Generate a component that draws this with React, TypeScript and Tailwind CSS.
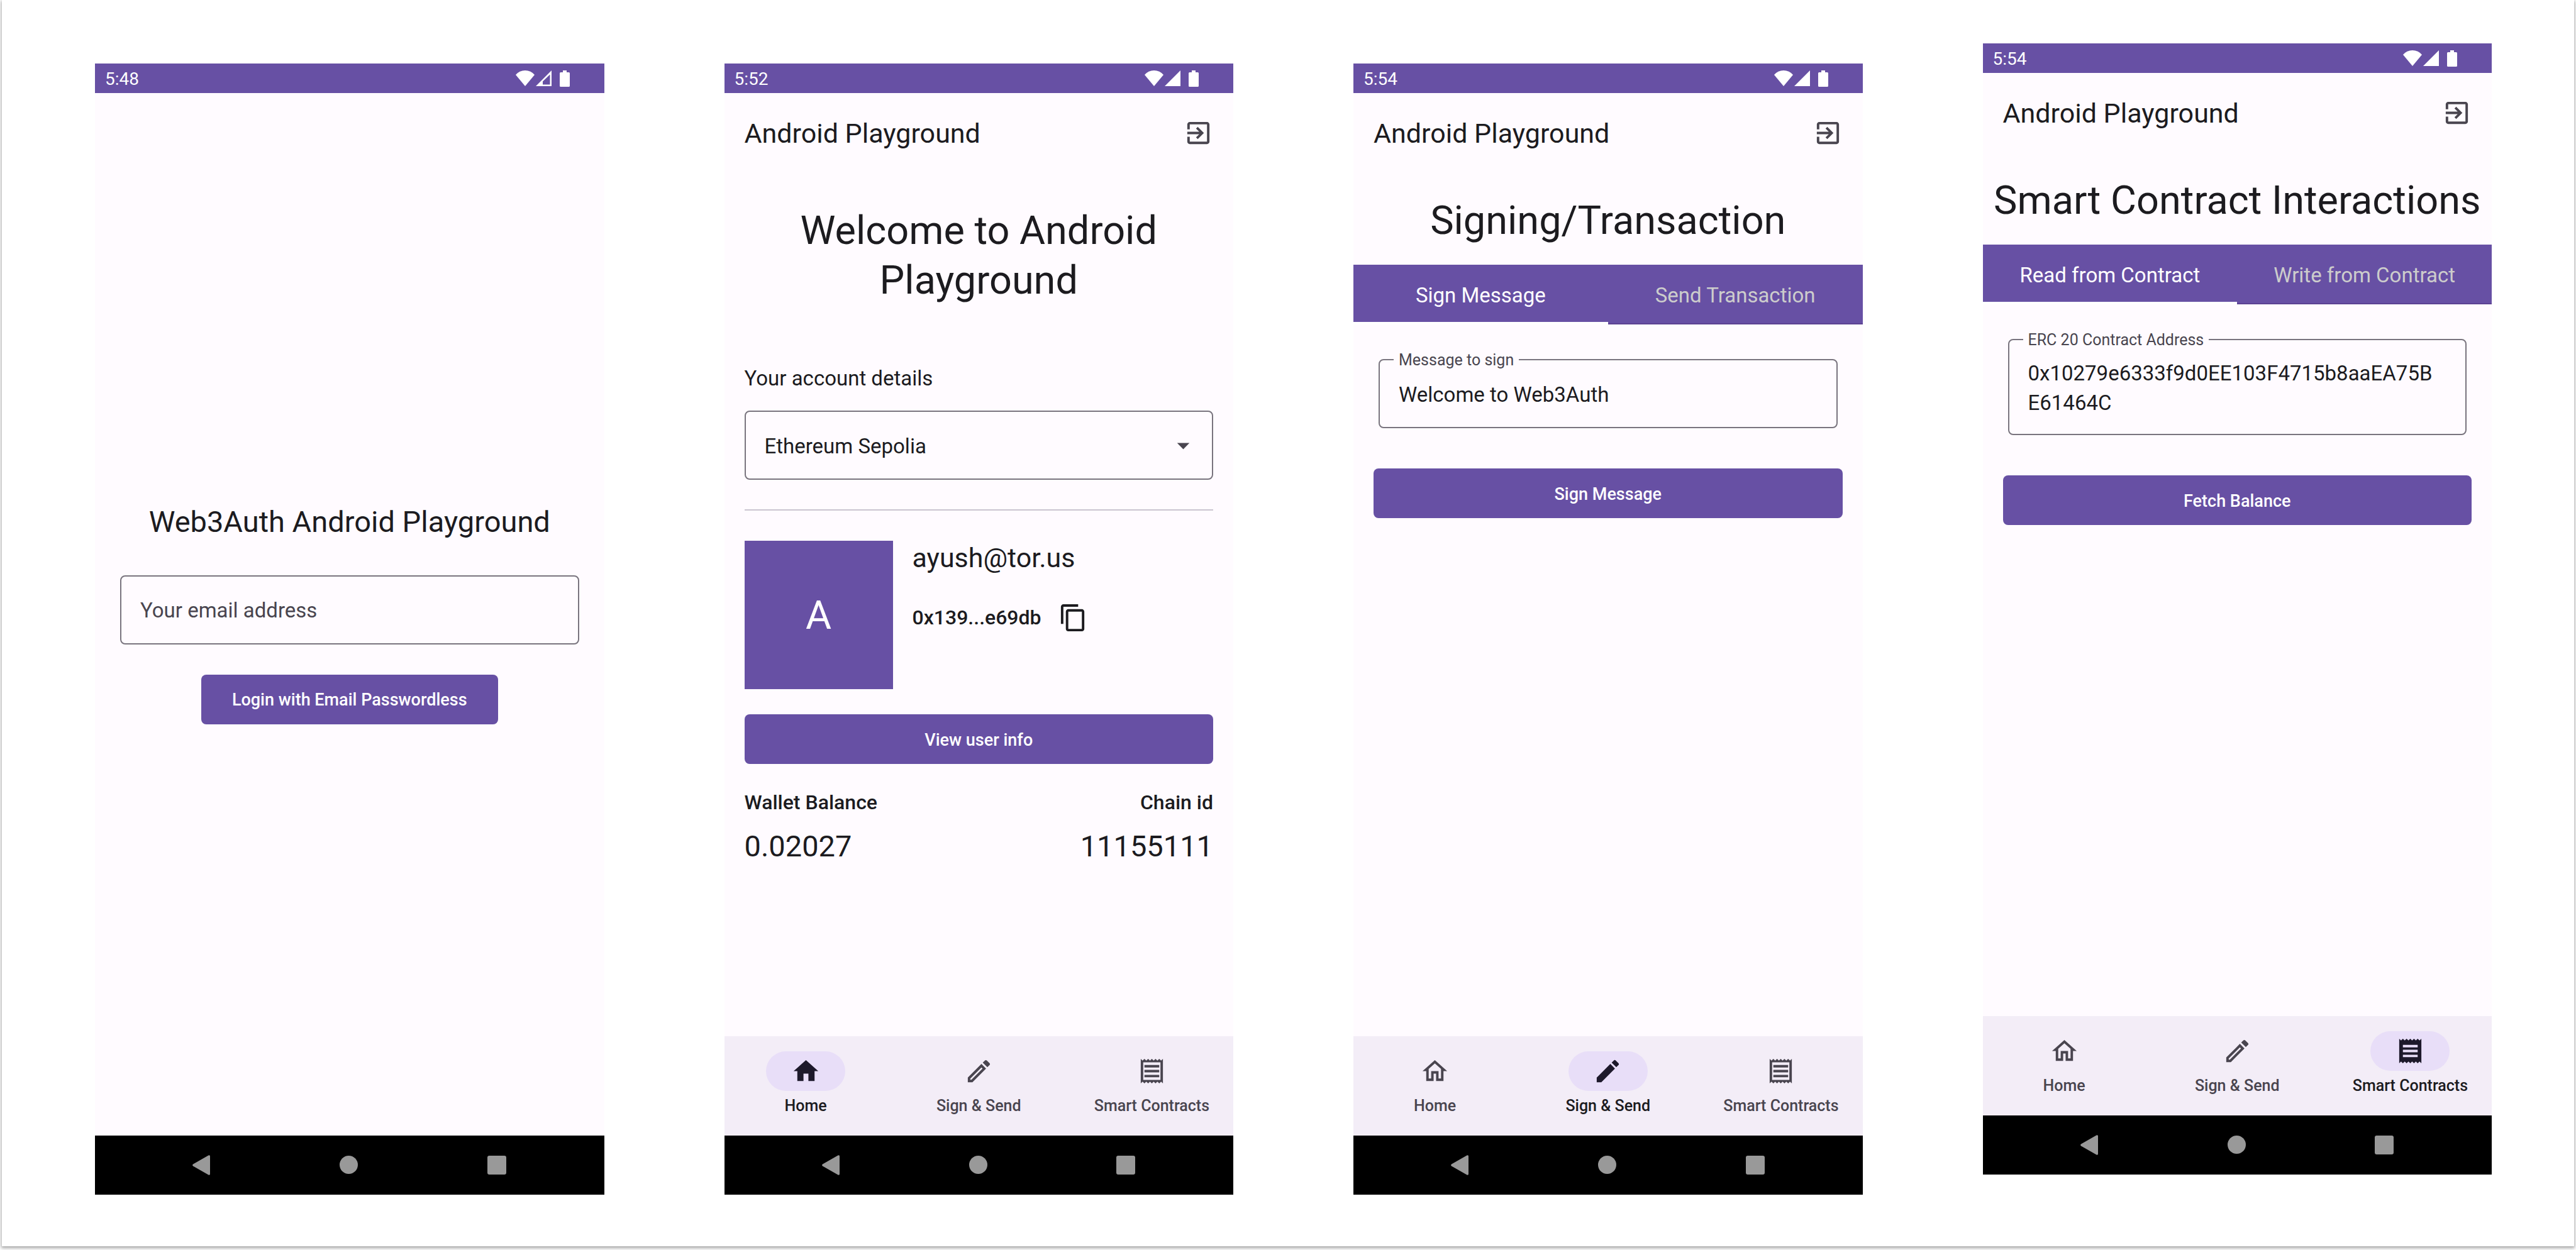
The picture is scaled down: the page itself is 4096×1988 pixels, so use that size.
import type { ReactNode } from "react";

type Tab = "home" | "sign" | "contracts";

const RECEIPT_EDGE =
  "M3 22l1.5-1.5L6 22l1.5-1.5L9 22l1.5-1.5L12 22l1.5-1.5L15 22l1.5-1.5L18 22l1.5-1.5L21 22V2l-1.5 1.5L18 2l-1.5 1.5L15 2l-1.5 1.5L12 2l-1.5 1.5L9 2 7.5 3.5 6 2 4.5 3.5 3 2v20z";

const ICONS = {
  exit: "M10.09 15.59L11.5 17l5-5-5-5-1.41 1.41L12.67 11H3v2h9.67l-2.58 2.59zM19 3H5c-1.11 0-2 .9-2 2v4h2V5h14v14H5v-4H3v4c0 1.1.89 2 2 2h14c1.1 0 2-.9 2-2V5c0-1.1-.9-2-2-2z",
  copy: "M16 1H4c-1.1 0-2 .9-2 2v14h2V3h12V1zm3 4H8c-1.1 0-2 .9-2 2v14c0 1.1.9 2 2 2h11c1.1 0 2-.9 2-2V7c0-1.1-.9-2-2-2zm0 16H8V7h11v14z",
  dropDown: "M7 10l5 5 5-5z",
  home: "M10 20v-6h4v6h5v-8h3L12 3 2 12h3v8z",
  homeOutline:
    "M12 5.69l5 4.5V18h-2v-6H9v6H7v-7.81l5-4.5M12 3L2 12h3v8h6v-6h2v6h6v-8h3L12 3z",
  edit: "M3 17.25V21h3.75L17.81 9.94l-3.75-3.75L3 17.25zM20.71 7.04c.39-.39.39-1.02 0-1.41l-2.34-2.34c-.39-.39-1.02-.39-1.41 0l-1.83 1.83 3.75 3.75 1.83-1.83z",
  editOutline:
    "M14.06 9.02l.92.92L5.92 19H5v-.92l9.06-9.06M17.66 3c-.25 0-.51.1-.7.29l-1.83 1.83 3.75 3.75 1.83-1.83c.39-.39.39-1.02 0-1.41l-2.34-2.34c-.2-.2-.45-.29-.71-.29zm-3.6 3.19L3 17.25V21h3.75L17.81 9.94l-3.75-3.75z",
  receipt: RECEIPT_EDGE + "M18 17H6v-2h12v2zm0-4H6v-2h12v2zm0-4H6V7h12v2z",
  receiptOutline:
    RECEIPT_EDGE +
    "M19 19.09H5V4.91h14v14.18zM6 15h12v2H6zm0-4h12v2H6zm0-4h12v2H6z",
};

function Icon({ name }: { name: keyof typeof ICONS }) {
  return (
    <svg
      viewBox="0 0 24 24"
      className="size-[47px] shrink-0"
      fill="currentColor"
      fillRule={name === "receipt" || name === "receiptOutline" ? "evenodd" : undefined}
      aria-hidden="true"
    >
      <path d={ICONS[name]} />
    </svg>
  );
}

function StatusBar({ time, weakSignal }: { time: string; weakSignal?: boolean }) {
  return (
    <div className="flex h-[47px] shrink-0 items-center justify-between bg-[#6750a4] pr-[55px] pl-4 text-white">
      <span className="pt-0.5 text-[28px] leading-[47px]">{time}</span>
      <div className="flex items-center">
        <svg viewBox="0 0 30 25" className="h-[25px] w-[30px]" fill="currentColor" aria-hidden="true">
          <path d="M15 25 0 7Q6 0 15 0T30 7z" />
        </svg>
        <svg viewBox="0 0 25 25" className="ml-0.5 h-[25px] w-[25px]" aria-hidden="true">
          {weakSignal ? (
            <path
              d="M0 25 25 0V25zM11 22.5H22.5V6.5L11 17.5z"
              fill="currentColor"
              fillRule="evenodd"
            />
          ) : (
            <path d="M0 25 25 0V25z" fill="currentColor" />
          )}
        </svg>
        <svg viewBox="0 0 16 26" className="ml-[13px] h-[26px] w-4" fill="currentColor" aria-hidden="true">
          <path d="M5 0h6v3h3.500q1.500 0 1.500 1.500v20q0 1.500-1.500 1.500h-13Q0 26 0 24.500v-20Q0 3 1.500 3H5z" />
        </svg>
      </div>
    </div>
  );
}

function AppBar() {
  return (
    <header className="flex h-[126px] shrink-0 items-center justify-between px-8">
      <span className="pt-0.5 text-[43px] leading-[55px]">Android Playground</span>
      <button type="button" aria-label="Log out" className="text-[#49454f]">
        <Icon name="exit" />
      </button>
    </header>
  );
}

const NAV_ITEMS: {
  id: Tab;
  label: string;
  active: keyof typeof ICONS;
  idle: keyof typeof ICONS;
}[] = [
  { id: "home", label: "Home", active: "home", idle: "homeOutline" },
  { id: "sign", label: "Sign & Send", active: "edit", idle: "editOutline" },
  { id: "contracts", label: "Smart Contracts", active: "receipt", idle: "receiptOutline" },
];

function BottomNav({ current }: { current: Tab }) {
  return (
    <nav className="grid h-[158px] shrink-0 grid-cols-3 gap-4 bg-[#f3edf7]">
      {NAV_ITEMS.map((item) => {
        const on = item.id === current;
        return (
          <button
            key={item.id}
            type="button"
            aria-current={on ? "page" : undefined}
            className={
              on
                ? "flex flex-col items-center gap-2 pt-6 text-[#1c1b1f]"
                : "flex flex-col items-center gap-2 pt-6 text-[#49454f]"
            }
          >
            <span
              className={
                on
                  ? "flex h-[63px] w-[126px] items-center justify-center rounded-full bg-[#e8def8] text-[#1d192b]"
                  : "flex h-[63px] w-[126px] items-center justify-center"
              }
            >
              <Icon name={on ? item.active : item.idle} />
            </span>
            <span className="text-[25px] leading-8 font-medium whitespace-nowrap">{item.label}</span>
          </button>
        );
      })}
    </nav>
  );
}

function SystemNav() {
  const button = "flex w-[94px] items-center justify-center";
  return (
    <div className="flex h-[94px] shrink-0 items-stretch justify-between bg-black pr-[124px] pl-[122px] text-[#999]">
      <button type="button" aria-label="Back" className={button}>
        <svg viewBox="0 0 28 32" className="h-8 w-7" fill="currentColor" aria-hidden="true">
          <path d="M1 14.500 25.500.5Q28-.5 28 2v28q0 2.500-2.500 1.500L1 17.500Q-.8 16 1 14.500z" />
        </svg>
      </button>
      <button type="button" aria-label="Home screen" className={button}>
        <span className="size-[29px] rounded-full bg-current" />
      </button>
      <button type="button" aria-label="Recent apps" className={button}>
        <span className="size-[30px] rounded-[3px] bg-current" />
      </button>
    </div>
  );
}

function Phone({
  time,
  weakSignal,
  tab,
  className,
  children,
}: {
  time: string;
  weakSignal?: boolean;
  tab?: Tab;
  className?: string;
  children: ReactNode;
}) {
  return (
    <section
      className={`flex aspect-[9/20] min-w-0 flex-col bg-[#fffbff] text-[#1c1b1f] ${className ?? ""}`}
    >
      <StatusBar time={time} weakSignal={weakSignal} />
      {tab && <AppBar />}
      <div className="flex min-h-0 flex-1 flex-col">{children}</div>
      {tab && <BottomNav current={tab} />}
      <SystemNav />
    </section>
  );
}

function FilledButton({ children, className }: { children: ReactNode; className?: string }) {
  return (
    <button
      type="button"
      className={`h-[79px] rounded-lg bg-[#6750a4] px-[49px] pt-0.5 text-[27px] leading-10 font-medium text-white ${className ?? ""}`}
    >
      {children}
    </button>
  );
}

function TabRow({ first, second }: { first: string; second: string }) {
  return (
    <div role="tablist" className="mt-[31px] grid h-[95px] shrink-0 grid-cols-2 bg-[#6750a4] text-[33px] leading-[47px]">
      <button role="tab" type="button" aria-selected="true" className="border-b-4 border-white pt-1.5 text-white">
        {first}
      </button>
      <button role="tab" type="button" aria-selected="false" className="border-b-2 border-[#5b4292] pt-1 text-[#ccc]">
        {second}
      </button>
    </div>
  );
}

const FIELD =
  "block w-full rounded-lg border-2 border-[#79747e] bg-transparent px-[30px] text-[33px] leading-[47px]";

function LabelledField({ id, label, children }: { id: string; label: string; children: ReactNode }) {
  return (
    <div className="relative mx-10 mt-[55px]">
      {children}
      <label
        htmlFor={id}
        className="absolute -top-3.5 left-6 bg-[#fffbff] px-2 text-[25px] leading-8 text-[#49454f]"
      >
        {label}
      </label>
    </div>
  );
}

function LoginScreen() {
  return (
    <div className="flex flex-1 flex-col items-center justify-center px-10 pb-1">
      <h1 className="text-[47px] leading-[63px]">Web3Auth Android Playground</h1>
      <input
        type="email"
        aria-label="Your email address"
        placeholder="Your email address"
        className={`mt-[54px] h-[110px] pt-0.5 ${FIELD} placeholder:text-[#49454f] placeholder:opacity-100`}
      />
      <FilledButton className="mt-12">Login with Email Passwordless</FilledButton>
    </div>
  );
}

function HomeScreen() {
  return (
    <div className="flex flex-col px-8 pt-[53px]">
      <h1 className="text-center text-[63px] leading-[79px]">Welcome to Android Playground</h1>
      <label htmlFor="chain" className="mt-[93px] text-[33px] leading-[47px]">
        Your account details
      </label>
      <div className="relative mt-7">
        <select id="chain" className={`h-[110px] appearance-none pt-0.5 ${FIELD}`}>
          <option>Ethereum Sepolia</option>
        </select>
        <span className="pointer-events-none absolute inset-y-0 right-6 flex items-center text-[#49454f]">
          <Icon name="dropDown" />
        </span>
      </div>
      <hr className="mt-[47px] border-t-2 border-[#cac4d0]" />
      <div className="mt-12 flex gap-[31px]">
        <div className="flex size-[236px] shrink-0 items-center justify-center bg-[#6750a4] text-[63px] leading-[79px] text-white">
          A
        </div>
        <div className="flex flex-col">
          <span className="text-[43px] leading-[55px]">ayush@tor.us</span>
          <div className="mt-5 flex items-center text-[32px] leading-[47px] font-medium">
            <span className="pr-1">0x139...e69db</span>
            <button type="button" aria-label="Copy address" className="flex size-[94px] items-center justify-center">
              <Icon name="copy" />
            </button>
          </div>
        </div>
      </div>
      <FilledButton className="mt-10">View user info</FilledButton>
      <dl className="mt-[38px] flex justify-between">
        <div>
          <dt className="text-[32px] leading-[47px] font-medium">Wallet Balance</dt>
          <dd className="mt-3.5 text-[47px] leading-[63px]">0.02027</dd>
        </div>
        <div className="text-right">
          <dt className="text-[32px] leading-[47px] font-medium">Chain id</dt>
          <dd className="mt-3.5 text-[47px] leading-[63px]">11155111</dd>
        </div>
      </dl>
    </div>
  );
}

function SignScreen() {
  return (
    <div className="flex flex-col pt-[37px]">
      <h1 className="text-center text-[63px] leading-[79px] whitespace-nowrap">Signing/Transaction</h1>
      <TabRow first="Sign Message" second="Send Transaction" />
      <LabelledField id="message" label="Message to sign">
        <input id="message" type="text" defaultValue="Welcome to Web3Auth" className={`h-[110px] pt-0.5 ${FIELD}`} />
      </LabelledField>
      <FilledButton className="mx-8 mt-16">Sign Message</FilledButton>
    </div>
  );
}

function ContractScreen() {
  return (
    <div className="flex flex-col pt-[37px]">
      <h1 className="text-center text-[63px] leading-[79px] whitespace-nowrap">Smart Contract Interactions</h1>
      <TabRow first="Read from Contract" second="Write from Contract" />
      <LabelledField id="contract" label="ERC 20 Contract Address">
        <textarea
          id="contract"
          rows={2}
          spellCheck={false}
          defaultValue="0x10279e6333f9d0EE103F4715b8aaEA75BE61464C"
          className={`h-[153px] resize-none overflow-hidden pt-[29px] pr-10 break-all ${FIELD}`}
        />
      </LabelledField>
      <FilledButton className="mx-8 mt-16">Fetch Balance</FilledButton>
    </div>
  );
}

export default function App() {
  return (
    <div className="flex min-h-screen bg-white px-[3px] pb-1.5 font-[Roboto,sans-serif]">
      <main className="grid flex-1 grid-cols-4 items-start gap-x-[191px] bg-white pt-[69px] pr-[131px] pl-[148px] shadow-[0_2px_5px_1px_rgba(0,0,0,0.35)]">
        <Phone time="5:48" weakSignal className="mt-8">
          <LoginScreen />
        </Phone>
        <Phone time="5:52" tab="home" className="mt-8">
          <HomeScreen />
        </Phone>
        <Phone time="5:54" tab="sign" className="mt-8">
          <SignScreen />
        </Phone>
        <Phone time="5:54" tab="contracts">
          <ContractScreen />
        </Phone>
      </main>
    </div>
  );
}
